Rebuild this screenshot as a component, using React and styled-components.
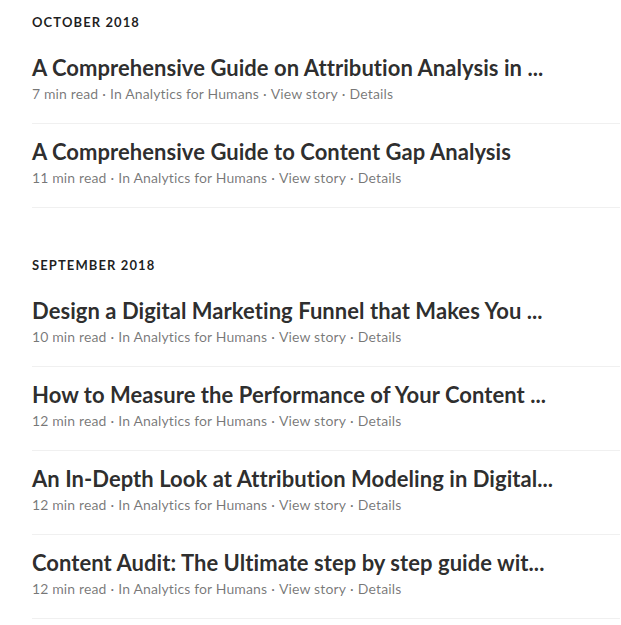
import React from "react";
import styled, { createGlobalStyle } from "styled-components";

const Global = createGlobalStyle`
  html, body { margin: 0; padding: 0; background: #fff; }
  body { font-family: "Lato", "Noto Sans", sans-serif; -webkit-font-smoothing: antialiased; }
`;

const Page = styled.div`
  padding: 12px 0 0 32px;
  width: 588px;
`;

const Section = styled.section`
  margin-bottom: 47px;
`;

const MonthHeader = styled.h4`
  margin: 0 0 8px;
  font-size: 13px;
  line-height: 20px;
  font-weight: 700;
  letter-spacing: 1.1px;
  text-transform: uppercase;
  color: rgba(0, 0, 0, 0.88);
`;

const Item = styled.article`
  padding: 14px 0 19px;
  border-bottom: 1px solid #f0f0f0;
`;

const Title = styled.h3`
  margin: 0;
  font-size: 22px;
  line-height: 28px;
  font-weight: 700;
  letter-spacing: 0.05px;
  color: rgba(0, 0, 0, 0.84);
  white-space: nowrap;
`;

const Meta = styled.div`
  margin-top: 2px;
  font-size: 14px;
  line-height: 20px;
  letter-spacing: 0.13px;
  color: rgba(0, 0, 0, 0.54);
`;

const Sep = styled.span`
  padding: 0 4px;
`;

const sections = [
  {
    month: "October 2018",
    items: [
      ["A Comprehensive Guide on Attribution Analysis in ...", 7],
      ["A Comprehensive Guide to Content Gap Analysis", 11],
    ],
  },
  {
    month: "September 2018",
    items: [
      ["Design a Digital Marketing Funnel that Makes You ...", 10],
      ["How to Measure the Performance of Your Content ...", 12],
      ["An In-Depth Look at Attribution Modeling in Digital...", 12],
      ["Content Audit: The Ultimate step by step guide wit...", 12],
    ],
  },
];

export default function App() {
  return (
    <>
      <Global />
      <Page>
        {sections.map((s) => (
          <Section key={s.month}>
            <MonthHeader>{s.month}</MonthHeader>
            {s.items.map(([t, m]) => (
              <Item key={t}>
                <Title>{t}</Title>
                <Meta>
                  {m} min read<Sep>·</Sep>In Analytics for Humans<Sep>·</Sep>View story<Sep>·</Sep>Details
                </Meta>
              </Item>
            ))}
          </Section>
        ))}
      </Page>
    </>
  );
}
